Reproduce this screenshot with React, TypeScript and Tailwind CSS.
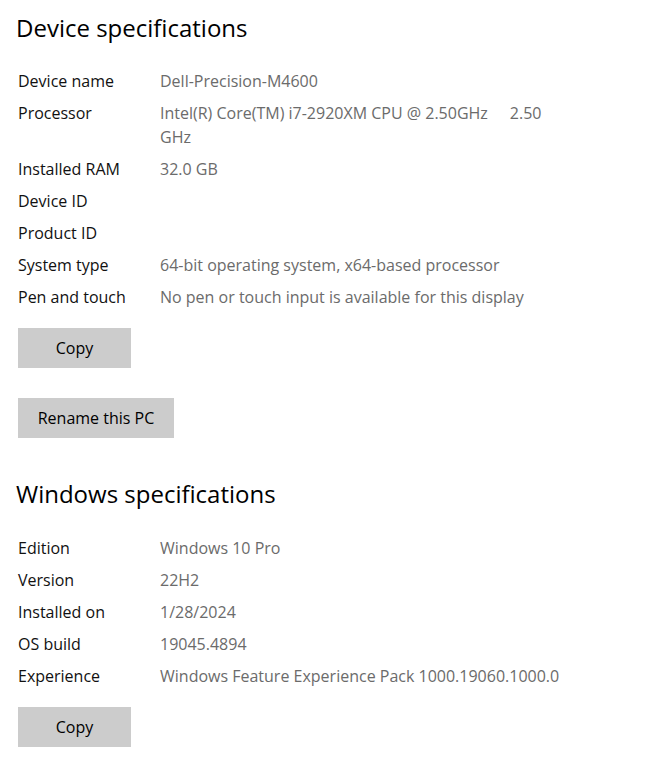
const deviceSpecs: [string, React.ReactNode][] = [
  ['Device name', 'Dell-Precision-M4600'],
  [
    'Processor',
    <>
      Intel(R) Core(TM) i7-2920XM CPU @ 2.50GHz
      <span className="inline-block w-[22px]" />
      2.50
      <br />
      GHz
    </>,
  ],
  ['Installed RAM', '32.0 GB'],
  ['Device ID', ''],
  ['Product ID', ''],
  ['System type', '64-bit operating system, x64-based processor'],
  ['Pen and touch', 'No pen or touch input is available for this display'],
];

const windowsSpecs: [string, string][] = [
  ['Edition', 'Windows 10 Pro'],
  ['Version', '22H2'],
  ['Installed on', '1/28/2024'],
  ['OS build', '19045.4894'],
  ['Experience', 'Windows Feature Experience Pack 1000.19060.1000.0'],
];

function SpecRows({ rows }: { rows: [string, React.ReactNode][] }) {
  return (
    <div className="flex flex-col gap-2">
      {rows.map(([label, value]) => (
        <div key={label} className="flex text-[16px] leading-6">
          <div className="w-[142px] shrink-0 text-[#111111]">{label}</div>
          <div className="text-[#6b6b6b]">{value}</div>
        </div>
      ))}
    </div>
  );
}

function GrayButton({ children, className = '' }: { children: React.ReactNode; className?: string }) {
  return (
    <button type="button" className={`h-10 bg-[#cccccc] text-[16px] text-black ${className}`}>
      {children}
    </button>
  );
}

export default function App() {
  return (
    <div
      className="min-h-screen bg-white pl-[18px] pt-3"
      style={{ fontFamily: '"Open Sans", "Noto Sans", sans-serif' }}
    >
      <h1 className="-ml-0.5 text-[24px] leading-8 text-black">Device specifications</h1>
      <div className="mt-[25px]">
        <SpecRows rows={deviceSpecs} />
      </div>
      <div className="mt-[19px] flex flex-col items-start gap-[30px]">
        <GrayButton className="w-[113px]">Copy</GrayButton>
        <GrayButton className="w-[156px]">Rename this PC</GrayButton>
      </div>

      <h1 className="-ml-0.5 mt-10 text-[24px] leading-8 text-black">Windows specifications</h1>
      <div className="mt-[26px]">
        <SpecRows rows={windowsSpecs} />
      </div>
      <div className="mt-[19px]">
        <GrayButton className="w-[113px]">Copy</GrayButton>
      </div>
    </div>
  );
}
